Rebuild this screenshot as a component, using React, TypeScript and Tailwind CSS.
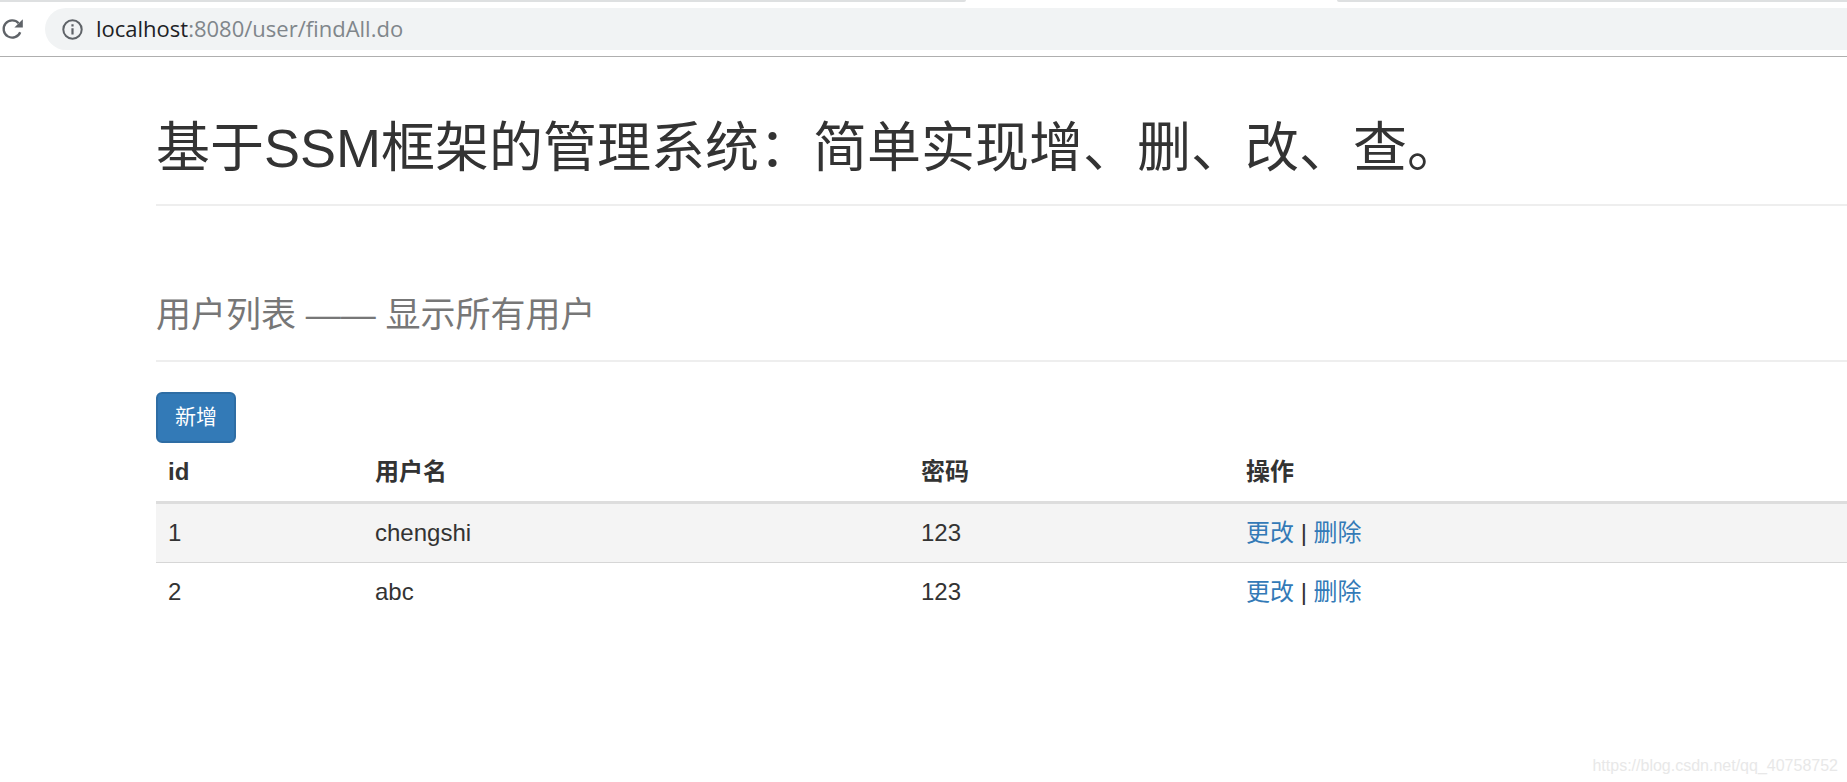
interface User {
    id: number;
    name: string;
    password: string;
}

const users: User[] = [
    { id: 1, name: "chengshi", password: "123" },
    { id: 2, name: "abc", password: "123" },
];

function AddressBar() {
    return (
        <header className="border-b border-[#afafaf] bg-white">
            <div className="flex h-[2px] justify-between">
                <div className="w-[966px] rounded-br-sm bg-[#dee0e1]" />
                <div className="w-[510px] rounded-bl-sm bg-[#dee0e1]" />
            </div>
            <div className="flex items-center gap-[21px] pt-[6px] pb-[6px]">
                <button aria-label="reload" className="text-[#5f6368]">
                    <svg width="24" height="24" viewBox="0 0 24 24" fill="none">
                        <path d="M20.2 15.2A8.6 8.6 0 1 1 18.6 6.2" stroke="currentColor" strokeWidth="2.3" />
                        <path d="M22.8 2.2V10.6H14.4Z" fill="currentColor" />
                    </svg>
                </button>
                <div className="flex h-[42px] flex-1 items-center rounded-l-full bg-[#f1f3f4] pl-[17px]">
                    <svg width="21" height="21" viewBox="0 0 21 21" fill="none" className="text-[#5f6368]">
                        <circle cx="10.5" cy="10.5" r="9.2" stroke="currentColor" strokeWidth="2" />
                        <path d="M10.5 9.2V15.4M10.5 5.3V7.5" stroke="currentColor" strokeWidth="2.2" />
                    </svg>
                    <p className="ml-[13px] pb-[2px] font-['Open_Sans','Noto_Sans',sans-serif] text-[22px] leading-[30px] text-[#80868b]">
                        <span className="text-[#202124]">localhost</span>:8080/user/findAll.do
                    </p>
                </div>
            </div>
        </header>
    );
}

function UserTable() {
    return (
        <table className="w-full table-fixed text-left text-[24px] leading-[34px]">
            <thead>
                <tr className="border-b-[3px] border-[#dddddd]">
                    <th className="w-[207px] px-3 py-3 font-bold">id</th>
                    <th className="w-[546px] px-3 py-3 font-bold">用户名</th>
                    <th className="w-[325px] px-3 py-3 font-bold">密码</th>
                    <th className="px-3 py-3 font-bold">操作</th>
                </tr>
            </thead>
            <tbody>
                {users.map((user) => (
                    <tr key={user.id} className="border-b border-[#d6d6d6] odd:bg-[#f4f4f4] last:border-b-0">
                        <td className="px-3 py-3">{user.id}</td>
                        <td className="px-3 py-3">{user.name}</td>
                        <td className="px-3 py-3">{user.password}</td>
                        <td className="px-3 py-3">
                            <a href="#update" className="text-[#337ab7]">更改</a>
                            {" | "}
                            <a href="#delete" className="text-[#337ab7]">删除</a>
                        </td>
                    </tr>
                ))}
            </tbody>
        </table>
    );
}

export default function App() {
    return (
        <div className="flex min-h-screen flex-col bg-white font-['Liberation_Sans','Noto_Sans_CJK_SC',sans-serif] text-[#333333]">
            <AddressBar />
            <main className="pl-[156px]">
                <div className="border-b-2 border-[#eeeeee] pt-[61px] pb-[26px]">
                    <h1 className="text-[54px] leading-[60px]">基于SSM框架的管理系统：简单实现增、删、改、查。</h1>
                </div>
                <div className="border-b-2 border-[#eeeeee] pt-[89px] pb-[25px]">
                    <h2 className="text-[35px] leading-[40px] text-[#777777]">用户列表 —— 显示所有用户</h2>
                </div>
                <button className="mt-[30px] block rounded-md border-2 border-[#2e6da4] bg-[#337ab7] px-[17px] pt-[7px] pb-[9px] text-[21px] leading-[31px] text-white">
                    新增
                </button>
                <UserTable />
            </main>
            <footer className="mt-auto pr-[9px] pb-[6px] text-right text-[16px] leading-[20px] text-[#e8e8e8]">
                https://blog.csdn.net/qq_40758752
            </footer>
        </div>
    );
}
